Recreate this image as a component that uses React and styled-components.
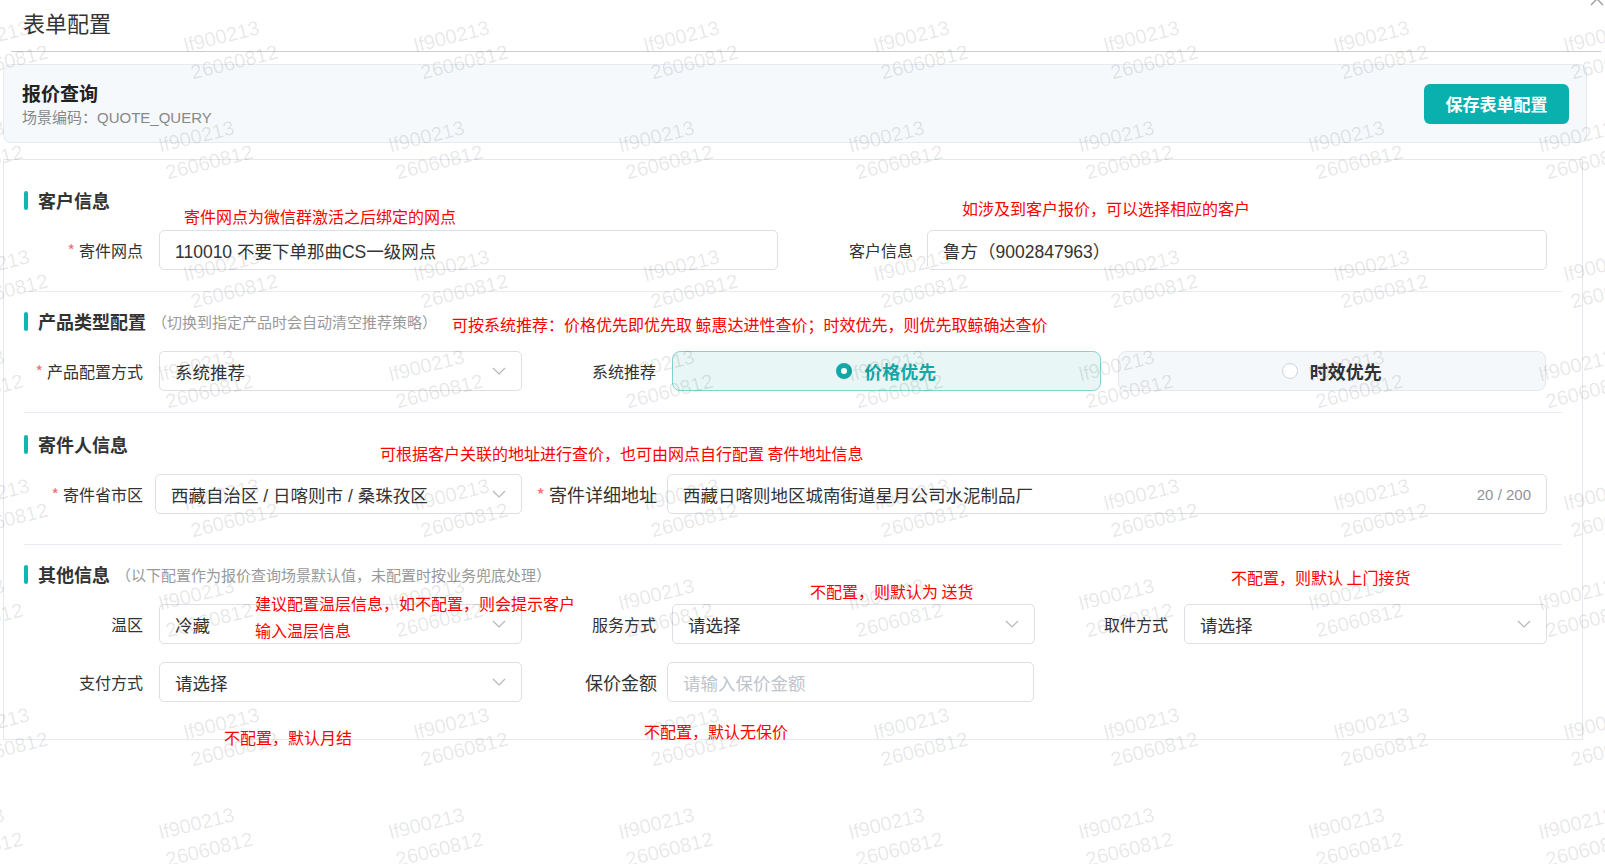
import React from 'react';
import styled, { createGlobalStyle } from 'styled-components';

const GlobalStyle = createGlobalStyle`
  html, body { margin: 0; padding: 0; background: #fff; }
  body { font-family: "Liberation Sans", "Noto Sans CJK SC", sans-serif; color: #333; }
  * { box-sizing: border-box; }
`;

const Page = styled.div`
  position: relative;
  width: 1605px;
  height: 864px;
  overflow: hidden;
`;

const TopBar = styled.div`
  margin-left: 11px;
  width: 1590px;
  height: 52px;
  padding: 0 0 8px 12px;
  display: flex;
  align-items: center;
  border-bottom: 1px solid #cdcdcd;
`;

const PageTitle = styled.div`
  font-size: 22px;
  color: #333;
`;

const CloseBtn = styled.div`
  position: absolute;
  left: 1590px;
  top: -8px;
  width: 14px;
  height: 14px;
`;

const HeaderCard = styled.div`
  margin: 12px 18px 0 3px;
  height: 79px;
  background: #f5f9fc;
  border: 1px solid #e6ebf1;
  border-radius: 8px;
  padding: 0 17px 0 18px;
  display: flex;
  align-items: center;
  justify-content: space-between;
`;

const SceneName = styled.div`
  font-size: 19px;
  font-weight: bold;
  color: #222;
  line-height: 24px;
  padding-top: 4px;
`;

const SceneCode = styled.div`
  margin-top: 1px;
  font-size: 15px;
  color: #888;
  line-height: 20px;
`;

const SaveButton = styled.button`
  width: 145px;
  height: 40px;
  border: none;
  border-radius: 6px;
  background: #09b0ae;
  color: #fff;
  font-family: "Noto Sans CJK SC", sans-serif;
  font-size: 17px;
  font-weight: bold;
  cursor: pointer;
`;

const FormCard = styled.div`
  position: relative;
  margin: 16px 22px 0 3px;
  border: 1px solid #e4e8ef;
  padding: 11px 20px 0;
`;

const Section = styled.div`
  padding: ${p => p.$top}px 0 ${p => p.$bottom}px;
  border-bottom: ${p => (p.$last ? 'none' : '1px solid #e8ecf2')};
`;

const SectionHead = styled.div`
  height: 40px;
  display: flex;
  align-items: center;
  font-family: "Noto Sans CJK SC", sans-serif;
  font-size: 18px;
  font-weight: bold;
  color: #333;
`;

const Bar = styled.span`
  width: 4px;
  height: 19px;
  border-radius: 2px;
  background: #13b5b1;
  margin-right: 10px;
`;

const HeadNote = styled.span`
  margin-left: 6px;
  font-size: 15px;
  font-weight: normal;
  color: #999;
`;

const Row = styled.div`
  display: flex;
  height: 40px;
  margin-top: ${p => p.$mt}px;
`;

const Field = styled.div`
  display: flex;
  align-items: center;
`;

const Label = styled.div`
  width: ${p => p.$w}px;
  padding-right: ${p => p.$pr}px;
  text-align: right;
  white-space: nowrap;
  font-family: "Noto Sans CJK SC", sans-serif;
  font-size: ${p => (p.$big ? 18 : 16)}px;
  color: #333;
`;

const Star = styled.span`
  color: #f56c6c;
  margin-right: 4px;
`;

const Box = styled.div`
  width: ${p => p.$w}px;
  height: 40px;
  border: 1px solid #dcdfe6;
  border-radius: 5px;
  background: #fff;
  padding: 0 15px;
  display: flex;
  align-items: center;
  justify-content: space-between;
  font-size: 17.5px;
  color: #333;
  white-space: nowrap;
`;

const Placeholder = styled.span`
  color: #c0c4cc;
`;

const Counter = styled.span`
  font-size: 15px;
  color: #909399;
`;

const RadioGroup = styled.div`
  width: 874px;
  display: flex;
  gap: 17px;
`;

const RadioCard = styled.div`
  flex: 1;
  height: 40px;
  border-radius: 8px;
  border: 1px solid ${p => (p.$active ? '#80d4cf' : '#e4e8ee')};
  background: ${p => (p.$active ? '#e8f6f5' : '#f5f8fb')};
  display: flex;
  align-items: center;
  justify-content: center;
  gap: 12px;
`;

const Dot = styled.span`
  width: 16px;
  height: 16px;
  border-radius: 50%;
  background: #fff;
  border: ${p => (p.$active ? '5px solid #13a8a6' : '1px solid #cfd3da')};
`;

const RadioText = styled.span`
  font-family: "Noto Sans CJK SC", sans-serif;
  font-size: 18px;
  font-weight: bold;
  color: ${p => (p.$active ? '#14a9a6' : '#333')};
`;

const Remark = styled.div`
  position: absolute;
  left: ${p => p.$x}px;
  top: ${p => p.$y}px;
  z-index: 2;
  font-family: "Noto Sans CJK SC", sans-serif;
  font-size: 16px;
  line-height: 20px;
  color: #f00;
  white-space: nowrap;
`;

const WatermarkLayer = styled.div`
  position: absolute;
  inset: 0;
  z-index: 5;
  pointer-events: none;
  overflow: hidden;
`;

const Mark = styled.div`
  position: absolute;
  transform: rotate(-14deg);
  transform-origin: left top;
  font-family: "Liberation Sans", sans-serif;
  font-size: 20px;
  line-height: 28px;
  color: rgba(0, 0, 0, 0.1);
  white-space: nowrap;
`;

const Chevron = () => (
  <svg width="14" height="8" viewBox="0 0 14 8">
    <path d="M1 1 L7 7 L13 1" fill="none" stroke="#b4b7bd" strokeWidth="1.2" />
  </svg>
);

const FieldLabel = ({ w, pr = 16, big, req, children }) => (
  <Label $w={w} $pr={pr} $big={big}>
    {req && <Star>*</Star>}
    {children}
  </Label>
);

const Select = ({ w, value }) => (
  <Box $w={w}>
    <span>{value}</span>
    <Chevron />
  </Box>
);

const marks = [];
for (let r = 0; r < 4; r++) {
  for (let c = -1; c < 7; c++) {
    marks.push({ x: 181 + 230 * c, y: 32 + 229 * r });
    marks.push({ x: 156 + 230 * c, y: 132 + 229 * r });
  }
}

const remarks = [
  { x: 180, y: 46, t: '寄件网点为微信群激活之后绑定的网点' },
  { x: 958, y: 38, t: '如涉及到客户报价，可以选择相应的客户' },
  { x: 448, y: 154, t: '可按系统推荐：价格优先即优先取 鲸惠达进性查价；时效优先，则优先取鲸确达查价' },
  { x: 376, y: 283, t: '可根据客户关联的地址进行查价，也可由网点自行配置 寄件地址信息' },
  { x: 251, y: 433, t: '建议配置温层信息，如不配置，则会提示客户' },
  { x: 251, y: 460, t: '输入温层信息' },
  { x: 806, y: 421, t: '不配置，则默认为 送货' },
  { x: 1227, y: 407, t: '不配置，则默认 上门接货' },
  { x: 220, y: 567, t: '不配置，默认月结' },
  { x: 640, y: 561, t: '不配置，默认无保价' },
];

export default function App() {
  return (
    <Page>
      <GlobalStyle />
      <TopBar>
        <PageTitle>表单配置</PageTitle>
      </TopBar>
      <CloseBtn>
        <svg width="14" height="14" viewBox="0 0 14 14">
          <path d="M1 1 L13 13 M13 1 L1 13" stroke="#999" strokeWidth="1.3" />
        </svg>
      </CloseBtn>

      <HeaderCard>
        <div>
          <SceneName>报价查询</SceneName>
          <SceneCode>场景编码：QUOTE_QUERY</SceneCode>
        </div>
        <SaveButton>保存表单配置</SaveButton>
      </HeaderCard>

      <FormCard>
        {remarks.map((r, i) => (
          <Remark key={i} $x={r.x} $y={r.y}>{r.t}</Remark>
        ))}

        <Section $top={9} $bottom={21}>
          <SectionHead><Bar />客户信息</SectionHead>
          <Row $mt={10}>
            <Field>
              <FieldLabel w={135} req>寄件网点</FieldLabel>
              <Box $w={619}>110010 不要下单那曲CS一级网点</Box>
            </Field>
            <Field>
              <FieldLabel w={149} pr={14}>客户信息</FieldLabel>
              <Box $w={620}>鲁方（9002847963）</Box>
            </Field>
          </Row>
        </Section>

        <Section $top={9} $bottom={21}>
          <SectionHead>
            <Bar />产品类型配置<HeadNote>（切换到指定产品时会自动清空推荐策略）</HeadNote>
          </SectionHead>
          <Row $mt={10}>
            <Field>
              <FieldLabel w={135} req>产品配置方式</FieldLabel>
              <Select w={363} value="系统推荐" />
            </Field>
            <Field>
              <FieldLabel w={150}>系统推荐</FieldLabel>
              <RadioGroup>
                <RadioCard $active>
                  <Dot $active />
                  <RadioText $active>价格优先</RadioText>
                </RadioCard>
                <RadioCard>
                  <Dot />
                  <RadioText>时效优先</RadioText>
                </RadioCard>
              </RadioGroup>
            </Field>
          </Row>
        </Section>

        <Section $top={11} $bottom={30}>
          <SectionHead><Bar />寄件人信息</SectionHead>
          <Row $mt={10}>
            <Field>
              <FieldLabel w={131} pr={12} req>寄件省市区</FieldLabel>
              <Select w={367} value="西藏自治区 / 日喀则市 / 桑珠孜区" />
            </Field>
            <Field>
              <FieldLabel w={145} pr={10} big req>寄件详细地址</FieldLabel>
              <Box $w={880}>
                <span>西藏日喀则地区城南街道星月公司水泥制品厂</span>
                <Counter>20 / 200</Counter>
              </Box>
            </Field>
          </Row>
        </Section>

        <Section $top={9} $bottom={37} $last>
          <SectionHead>
            <Bar />其他信息<HeadNote>（以下配置作为报价查询场景默认值，未配置时按业务兜底处理）</HeadNote>
          </SectionHead>
          <Row $mt={10}>
            <Field>
              <FieldLabel w={135}>温区</FieldLabel>
              <Select w={363} value="冷藏" />
            </Field>
            <Field>
              <FieldLabel w={150}>服务方式</FieldLabel>
              <Select w={363} value="请选择" />
            </Field>
            <Field>
              <FieldLabel w={149}>取件方式</FieldLabel>
              <Select w={363} value="请选择" />
            </Field>
          </Row>
          <Row $mt={18}>
            <Field>
              <FieldLabel w={135}>支付方式</FieldLabel>
              <Select w={363} value="请选择" />
            </Field>
            <Field>
              <FieldLabel w={145} pr={10} big>保价金额</FieldLabel>
              <Box $w={367}>
                <Placeholder>请输入保价金额</Placeholder>
              </Box>
            </Field>
          </Row>
        </Section>
      </FormCard>

      <WatermarkLayer>
        {marks.map((m, i) => (
          <Mark key={i} style={{ left: m.x, top: m.y }}>
            lf900213<br />26060812
          </Mark>
        ))}
      </WatermarkLayer>
    </Page>
  );
}
